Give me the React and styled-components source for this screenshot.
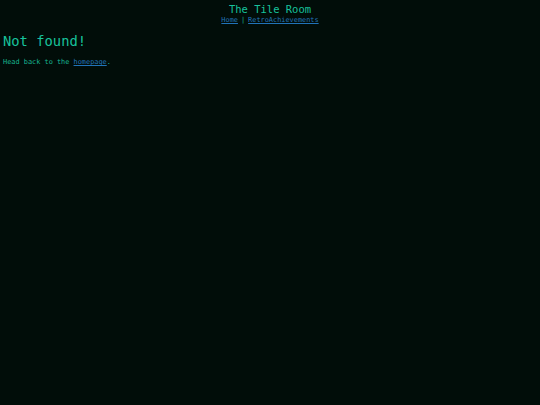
import React from "react";
import styled, { createGlobalStyle } from "styled-components";

const GlobalStyle = createGlobalStyle`
    html, body {
        margin: 0;
        padding: 0;
        background: #010d09;
        min-height: 100%;
    }
    body {
        font-family: "DejaVu Sans Mono", "Liberation Mono", monospace;
        color: #17b894;
    }
`;

const Page = styled.div`
    min-height: 405px;
    background: #010d09;
    padding: 0 3px;
    box-sizing: border-box;
`;

const Header = styled.header`
    display: flex;
    flex-flow: column;
    align-items: center;
    padding-top: 3px;
`;

const Title = styled.div`
    font-size: 10.5px;
    line-height: 13px;
    color: #17c29b;
`;

const Nav = styled.nav`
    font-size: 6.9px;
    line-height: 8px;
    color: #17b894;
    & > span {
        padding: 0 3px;
    }
`;

const Link = styled.a`
    color: #2173b8;
    text-decoration: underline;
`;

const Heading = styled.h1`
    margin: 9px 0 0;
    font-size: 13.8px;
    line-height: 17px;
    font-weight: normal;
    color: #17c29b;
`;

const Text = styled.p`
    margin: 8px 0 0;
    font-size: 6.9px;
    line-height: 9px;
`;

function App() {
    return (
        <>
            <GlobalStyle />
            <Page>
                <Header>
                    <Title>The Tile Room</Title>
                    <Nav>
                        <Link href="#">Home</Link>
                        <span>|</span>
                        <Link href="#">RetroAchievements</Link>
                    </Nav>
                </Header>
                <Heading>Not found!</Heading>
                <Text>
                    Head back to the <Link href="#">homepage</Link>.
                </Text>
            </Page>
        </>
    );
}

export default App;
